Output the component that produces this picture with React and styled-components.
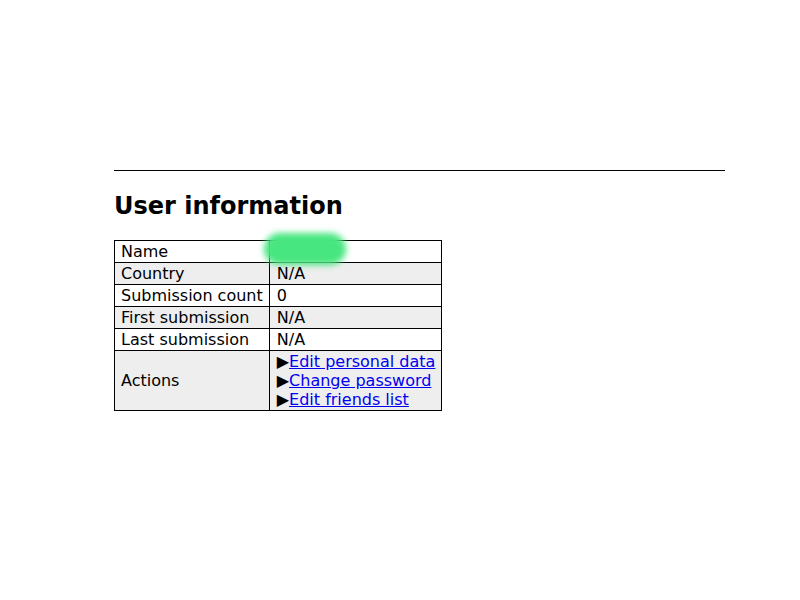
import React from 'react'
import styled, { createGlobalStyle } from 'styled-components'

const GlobalStyle = createGlobalStyle`
  body {
    margin: 0;
    background: #fff;
    font-family: "DejaVu Sans", Verdana, sans-serif;
    font-size: 16px;
    color: #000;
  }
`
const Page = styled.div`
  padding: 170px 75px 0 114px;
`
const Rule = styled.hr`
  margin: 0;
  border: none;
  border-top: 1px solid #000;
`
const Title = styled.h2`
  margin: 21px 0 20px;
  font-size: 24px;
  font-weight: bold;
  line-height: 28px;
`
const InfoTable = styled.table`
  border-collapse: collapse;
  border: 1px solid #000;
`
const Row = styled.tr`
  background: ${(p) => (p.$shaded ? '#eeeeee' : '#ffffff')};
`
const Cell = styled.td`
  position: relative;
  border: 1px solid #000;
  padding: 1px 6px;
  line-height: 19px;
  vertical-align: middle;
  white-space: nowrap;

  & + & {
    padding-left: 7px;
  }
`
const ActionLine = styled.div`
  line-height: 19px;
`
const Arrow = styled.span`
  color: #000;
`
const ActionLink = styled.a`
  color: #0000ee;
  text-decoration: underline;
`
const Redact = styled.div`
  position: absolute;
  left: -6px;
  top: -8px;
  width: 82px;
  height: 32px;
  border-radius: 16px;
  background: #48e680;
  filter: blur(3px);
`

const rows = [
  { label: 'Country', value: 'N/A' },
  { label: 'Submission count', value: '0' },
  { label: 'First submission', value: 'N/A' },
  { label: 'Last submission', value: 'N/A' },
]

const actions = ['Edit personal data', 'Change password', 'Edit friends list']

const App = () => {
  return (
    <>
      <GlobalStyle />
      <Page>
        <Rule />
        <Title>User information</Title>
        <InfoTable>
          <tbody>
            <Row>
              <Cell>Name</Cell>
              <Cell>
                <Redact />
                &nbsp;
              </Cell>
            </Row>
            {rows.map((r, i) => (
              <Row key={r.label} $shaded={i % 2 === 0}>
                <Cell>{r.label}</Cell>
                <Cell>{r.value}</Cell>
              </Row>
            ))}
            <Row $shaded>
              <Cell>Actions</Cell>
              <Cell>
                {actions.map((a) => (
                  <ActionLine key={a}>
                    <Arrow>▶</Arrow>
                    <ActionLink href="#">{a}</ActionLink>
                  </ActionLine>
                ))}
              </Cell>
            </Row>
          </tbody>
        </InfoTable>
      </Page>
    </>
  )
}

export default App
